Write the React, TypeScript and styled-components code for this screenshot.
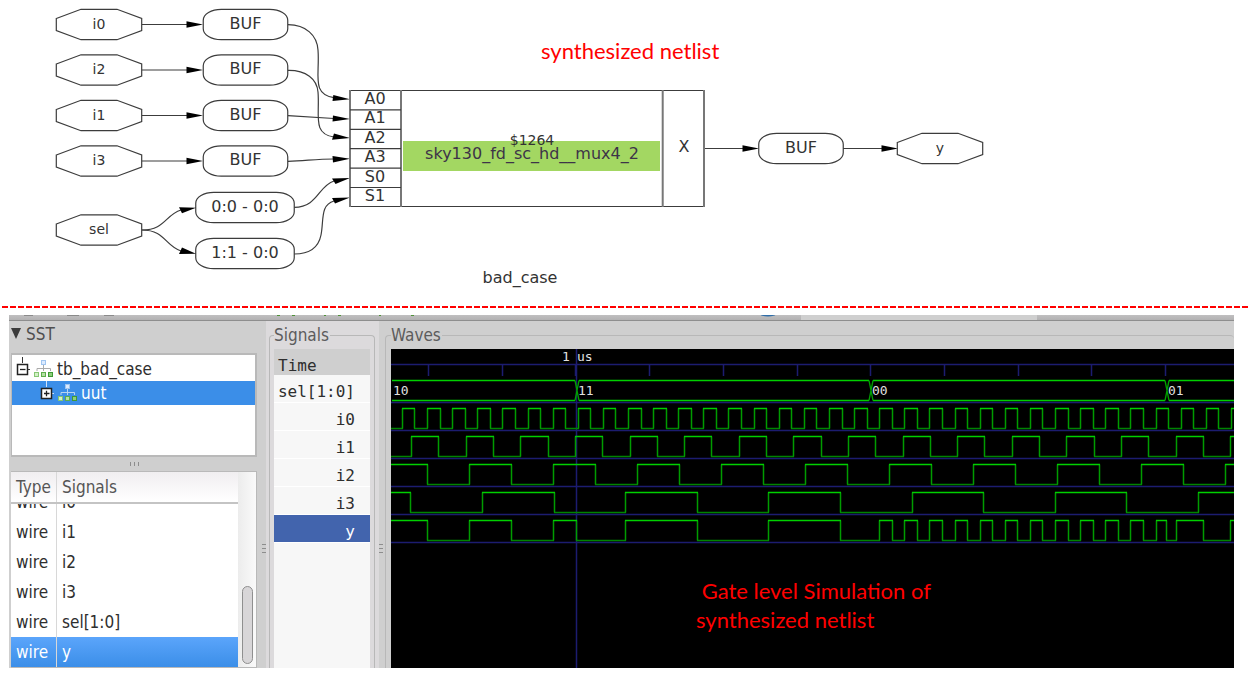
import React from "react";
import styled, { createGlobalStyle, css } from "styled-components";

const UI_FONT = `"DejaVu Sans Condensed", "DejaVu Sans", sans-serif`;
const MONO_FONT = `"DejaVu Sans Mono", monospace`;
const NOTE_FONT = `Lato, "Open Sans", sans-serif`;

const GlobalStyle = createGlobalStyle`
  * { box-sizing: border-box; }
  body { margin: 0; background: #fff; }
`;

const Page = styled.main`
  display: flex;
  flex-direction: column;
  padding-bottom: 8px;
`;

/* ---------- Netlist diagram ---------- */

const NetlistSection = styled.section`
  position: relative;
  overflow: hidden;
`;

const NetlistDrawing = styled.svg`
  display: block;
  font-family: "DejaVu Sans", sans-serif;
  font-size: 16px;
  fill: #333;
  text-anchor: middle;
`;

const NoteText = styled.p<{ $left: number; $top: number }>`
  position: absolute;
  left: ${(p) => p.$left}px;
  top: ${(p) => p.$top}px;
  margin: 0;
  font: 22px/29px ${NOTE_FONT};
  color: #f00;
  white-space: pre;
`;

const Divider = styled.hr`
  width: calc(100% - 2px);
  height: 2px;
  margin: 0 0 7px 2px;
  border: 0;
  background: repeating-linear-gradient(90deg, #f00 0 6px, #fff 6px 8px);
`;

const line = { fill: "none", stroke: "#3c3c3c", strokeWidth: 1.2 };

const Octagon = ({ x, y, label }: { x: number; y: number; label: string }) => (
  <g transform={`translate(${x} ${y})`}>
    <path {...line} d="M-42.7-6-18-15.2H18L42.7-6V6L18 15.2H-18L-42.7 6Z" />
    <text y={4} fontSize={14}>{label}</text>
  </g>
);

const RoundNode = ({ x, y, w, label }: { x: number; y: number; w: number; label: string }) => (
  <g transform={`translate(${x} ${y})`}>
    <rect {...line} x={-w / 2} y={-15.2} width={w} height={30.4} rx={18} ry={11} />
    <text y={4}>{label}</text>
  </g>
);

const Straight = ({ x1, x2, y }: { x1: number; x2: number; y: number }) => (
  <g>
    <path {...line} d={`M${x1} ${y}H${x2 - 15}`} />
    <path fill="#000" d={`M${x2 - 16.5} ${y - 3.2}L${x2} ${y}L${x2 - 16.5} ${y + 3.2}Z`} />
  </g>
);

const inputs = [
  { name: "i0", y: 24.5 },
  { name: "i2", y: 70 },
  { name: "i1", y: 115.5 },
  { name: "i3", y: 161 },
];

const wires = [
  "M288 24.7C306 25 317 35 318 50C320 75 311 94 334 97.7",
  "M288 70.3C306 70 317 79 318 92C320 115 312 134 334 137",
  "M288 115.7L334 118.5",
  "M288 161.3C305 161 315 159 334 159",
  "M294.3 207.3C318 207 318 186 334 181",
  "M294.3 254C312 254 319 245 321 235C324 220 320 205 334 201",
  "M142 230C165 230 165 215 181 210",
  "M142 230C165 230 165 246 181 251",
];

const heads = [
  "M333.3 95L350 99.3L332.5 101Z",
  "M334 133.5L350 138L332 139.8Z",
  "M333 115.5L350 119L332.500 121.5Z",
  "M332.500 156L350 158.700L333 162.500Z",
  "M332 178.500L350 178L335.500 184Z",
  "M332 198L350 197.500L335 203.500Z",
  "M179 207.300L196 207.700L182 213.300Z",
  "M182 247.500L196 253.700L179 254Z",
];

const pins = ["A0", "A1", "A2", "A3", "S0", "S1"];

const Netlist = () => (
  <NetlistSection>
    <NetlistDrawing width="1010" height="306" role="img" aria-label="Netlist of bad_case">
      {inputs.map((n) => (
        <g key={n.name}>
          <Octagon x={99} y={n.y} label={n.name} />
          <Straight x1={142} x2={203} y={n.y} />
          <RoundNode x={245.500} y={n.y} w={84.500} label="BUF" />
        </g>
      ))}
      <Octagon x={99} y={230} label="sel" />
      <RoundNode x={245} y={207.500} w={98.500} label="0:0 - 0:0" />
      <RoundNode x={245} y={253.500} w={98.500} label="1:1 - 0:0" />
      {wires.map((d) => <path key={d} {...line} d={d} />)}
      {heads.map((d) => <path key={d} fill="#000" d={d} />)}

      <rect x="403" y="141" width="257" height="30" fill="#a3d762" />
      <path {...line} d="M350 90.500H704V206.500H350Z" />
      <path {...line} strokeWidth={2} stroke="#777" d="M350 90V207M401 90V207M662.700 90V207M704 90V207" />
      {pins.map((p, i) => (
        <g key={p}>
          {i > 0 && <path {...line} d={`M350 ${90.500 + i * 19.400}H401`} />}
          <text x="375" y={104 + i * 19.400}>{p}</text>
        </g>
      ))}
      <text x="532" y="145" fontSize={14}>$1264</text>
      <text x="532" y="159" fill="#3d3348">sky130_fd_sc_hd__mux4_2</text>
      <text x="684" y="152">X</text>

      <Straight x1={705} x2={759} y={148.500} />
      <RoundNode x={801} y={148.500} w={84.500} label="BUF" />
      <Straight x1={843} x2={898} y={148.500} />
      <Octagon x={940} y={148.500} label="y" />
      <text x="520" y="283">bad_case</text>
    </NetlistDrawing>
    <NoteText $left={541} $top={36}>synthesized netlist</NoteText>
  </NetlistSection>
);

/* ---------- Waveform viewer ---------- */

const Viewer = styled.section`
  display: flex;
  flex-direction: column;
  margin: 0 14px 0 9px;
  background: #cfcfcf;
  font: 17px/24px ${UI_FONT};
  color: #2e2e2e;
  overflow: hidden;
`;

const ToolbarEdge = styled.div`
  height: 6px;
  border-bottom: 1px solid #8e8e8e;
  background: linear-gradient(#c0bfc0, #b2b1b2);
  svg { display: block; }
`;

const Panes = styled.div`
  display: flex;
  align-items: stretch;
`;

const TreePane = styled.div`
  display: flex;
  flex-direction: column;
  flex: none;
  width: 248px;
  padding: 1px 0 0 2px;
`;

const SstToggle = styled.button`
  display: flex;
  align-items: center;
  gap: 5px;
  height: 24px;
  margin-bottom: 7px;
  padding: 0;
  border: 0;
  background: none;
  font: inherit;
  color: #505050;
`;

const TreeBox = styled.ul`
  height: 104px;
  margin: 0;
  padding: 2px 0 0;
  border: 2px solid #b9b9b9;
  border-left-width: 1px;
  background: #fff;
  list-style: none;
`;

const TreeItem = styled.li<{ $depth: number; $selected?: boolean }>`
  display: flex;
  align-items: center;
  height: 24px;
  padding-left: ${(p) => 4 + p.$depth * 24}px;
  ${(p) => p.$selected && css`background: #3b8ee8; color: #fff;`}
  svg { flex: none; margin-right: 3px; }
`;

const RowGrip = styled.div`
  display: flex;
  justify-content: center;
  align-items: center;
  gap: 3px;
  height: 14px;
  i { width: 1px; height: 4px; background: #8d8d8d; }
`;

const ColumnGrip = styled.div<{ $width: number }>`
  display: flex;
  flex-direction: column;
  flex: none;
  align-items: flex-end;
  gap: 3px;
  width: ${(p) => p.$width}px;
  padding-top: 223px;
  i { width: 4px; height: 1px; background: #8d8d8d; }
`;

const SignalBox = styled.div`
  display: flex;
  flex: 1;
  border: 1px solid #b9b9b9;
  border-left: 0;
  background: #fff;
`;

const SignalTable = styled.table`
  display: flex;
  flex-direction: column;
  flex: 1;
  border-spacing: 0;
  thead {
    display: block;
    border-bottom: 2px solid #c4c4c4;
    background: linear-gradient(#f0eef0, #fff);
    color: #555;
  }
  tbody {
    display: flex;
    flex-direction: column;
    justify-content: flex-end;
    height: 163px;
    overflow: hidden;
  }
`;

const SignalRow = styled.tr<{ $selected?: boolean }>`
  display: grid;
  flex: none;
  grid-template-columns: 46px 1fr;
  height: 30px;
  line-height: 30px;
  ${(p) => p.$selected && css`
    background: linear-gradient(#5ba5fb, #3b8ee8);
    color: #fff;
  `}
  th, td { padding: 0 0 0 5px; font-weight: 400; text-align: left; }
  > :first-child { border-right: 1px solid #d8d8d8; }
`;

const Scrollbar = styled.div`
  display: flex;
  align-items: flex-end;
  justify-content: center;
  width: 18px;
  padding-bottom: 3px;
  background: linear-gradient(90deg, #ececec, #fafafa);
`;

const Thumb = styled.div`
  width: 11px;
  height: 78px;
  border: 1px solid #8f8f8f;
  border-radius: 6px;
  background: #d8d6d8;
`;

const SignalPane = styled.div`
  display: flex;
  flex: none;
  width: 113px;
  padding: 2px 4px 0 3px;
  background: #dcdadc;
`;

const WavePane = styled.div`
  display: flex;
  flex: 1;
  min-width: 0;
  padding: 2px 0 0 2px;
`;

const Frame = styled.fieldset<{ $open?: boolean }>`
  flex: 1;
  min-width: 0;
  margin: 0;
  padding: 2px ${(p) => (p.$open ? 0 : 4)}px 0 ${(p) => (p.$open ? 5 : 4)}px;
  border: 1px solid #b8b8b8;
  border-bottom: 0;
  border-right-width: ${(p) => (p.$open ? 0 : 1)}px;
  border-radius: 4px 4px 0 0;
  legend { padding: 0 1px 0 0; color: #5c5c5c; }
`;

const TraceNames = styled.ul`
  height: 319px;
  margin: 0;
  padding: 0;
  background: #f7f7f7;
  font: 16px/28px ${MONO_FONT};
  list-style: none;
`;

const TraceName = styled.li<{ $kind?: "time" | "selected" }>`
  height: 28px;
  padding-right: 15px;
  border-bottom: 1px solid #fff;
  line-height: 34px;
  text-align: right;
  ${(p) => p.$kind === "time" && css`
    height: 26px;
    padding: 0 0 0 4px;
    border: 0;
    background: #cfcfcf;
    text-align: left;
  `}
  ${(p) => p.$kind === "selected" && css`
    background: #4264ad;
    color: #fff;
  `}
`;

const WaveCanvas = styled.div`
  position: relative;
  height: 319px;
  background: #000;
  overflow: hidden;
`;

const WaveDrawing = styled.svg`
  display: block;
  width: 100%;
  height: 100%;
  font: 13px ${MONO_FONT};
  fill: #e0e0e0;
`;

const WAVE_END = 2600;

type Edge = { x: number; high: boolean };

/* Level changes of a square wave whose rising edge falls on `rise`. */
const clock = (rise: number, period: number): Edge[] => {
  const edges: Edge[] = [];
  for (let n = -2; rise + n * period < WAVE_END; n++) {
    edges.push({ x: rise + n * period, high: true });
    edges.push({ x: rise + (n + 0.5) * period, high: false });
  }
  return edges;
};

const levelAt = (edges: Edge[], x: number) => {
  let high = false;
  for (const e of edges) if (e.x <= x) high = e.high;
  return high;
};

const i0 = clock(11.4, 25.12);
const i1 = clock(20.6, 54.6);
const i2 = clock(78.5, 84.05);
const i3 = clock(91.5, 143.2);

const selects = [
  { from: 0, to: 185, value: "10", source: i2 },
  { from: 185, to: 479, value: "11", source: i3 },
  { from: 479, to: 775, value: "00", source: i0 },
  { from: 775, to: WAVE_END, value: "01", source: i1 },
];

/* The multiplexer output follows whichever input `sel` picks. */
const y: Edge[] = selects.flatMap((s) => [
  { x: s.from, high: levelAt(s.source, s.from) },
  ...s.source.filter((e) => e.x > s.from && e.x < s.to),
]);

const Trace = ({ edges, top }: { edges: Edge[]; top: number }) => {
  const hi = top + 0.5;
  const lo = top + 20.5;
  let highs = "";
  let lows = "";
  let sides = "";
  let x = 0;
  let high = levelAt(edges, 0);
  const run = (to: number) => {
    if (high) highs += `M${x} ${hi}H${to + 1}`;
    else lows += `M${x} ${lo}H${to + 1}`;
  };
  edges.filter((e) => e.x > 0).forEach((e) => {
    if (e.high === high) return;
    const at = Math.floor(e.x);
    run(at);
    sides += `M${at + 0.5} ${hi}V${lo}`;
    x = at;
    high = e.high;
  });
  run(WAVE_END);
  return (
    <g fill="none" strokeWidth={1.5}>
      <path d={lows} stroke="#008400" />
      <path d={sides} stroke="#009c00" />
      <path d={highs} stroke="#00d000" />
    </g>
  );
};

const ticks = Array.from({ length: 35 }, (_, n) => Math.floor(37.5 + n * 73.7) + 0.5);

const Waves = () => (
  <WaveDrawing role="img" aria-label="Waveforms">
    <g stroke="#1c1c70" strokeWidth={1.5} fill="none">
      <path d={`M0 15.500H${WAVE_END}`} />
      {ticks.map((x) => <path key={x} d={`M${x} 15V27`} />)}
      {[53.5, 81.5, 109.5, 137.5, 165.5, 193.5].map((sy) => (
        <path key={sy} d={`M0 ${sy}H${WAVE_END}`} />
      ))}
      <path d="M185.500 0V319" />
    </g>
    <text x="171" y="12">1</text>
    <text x="186" y="12">us</text>
    {selects.map((s, i) => (
      <g key={s.value}>
        <path
          fill="none"
          stroke="#00d000"
          strokeWidth={1.5}
          d={`M${s.from + (i ? 3 : 1)} 31.500H${s.to - 1}M${s.from + (i ? 3 : 1)} 51.500H${s.to - 1}`}
        />
        {i > 0 && (
          <path
            fill="none"
            stroke="#00a000"
            strokeWidth={1.3}
            d={`M${s.from - 1} 31.500L${s.from + 3} 51.500M${s.from + 3} 31.500L${s.from - 1} 51.500`}
          />
        )}
        <text x={s.from + 2} y="46">{s.value}</text>
      </g>
    ))}
    <Trace edges={i0} top={59} />
    <Trace edges={i1} top={87} />
    <Trace edges={i2} top={115} />
    <Trace edges={i3} top={143} />
    <Trace edges={y} top={171} />
  </WaveDrawing>
);

const TreeIcon = ({ expanded, selected }: { expanded?: boolean; selected?: boolean }) => (
  <svg width="38" height="24" viewBox="0 0 38 24">
    <path d="M6.500 0V6M12 12.500H14" stroke={selected ? "#cfe2fa" : "#333"} fill="none" />
    <rect x="1.500" y="7.500" width="10" height="10" fill="#fff" stroke="#222" strokeWidth="1.500" />
    <path d={expanded ? "M4 12.500H9.500" : "M4 12.500H9.500M6.500 9.800V15.200"} stroke="#222" strokeWidth="1.300" />
    <path d="M27.500 8V11.500M21 14V11.500H34.500V14M27.500 11V14" stroke={selected ? "#b9d4ef" : "#aaa"} fill="none" />
    <rect x="25.500" y="3.500" width="4" height="4" fill="#dcebff" stroke="#a0c5f0" />
    <rect x="18.500" y="15.500" width="4" height="4" fill="#d4f0c8" stroke="#86c774" />
    <rect x="25.500" y="15.500" width="4" height="4" fill="#b5e0a4" stroke="#5dad4c" />
    <rect x="32.500" y="15.500" width="4" height="4" fill="#8fce7c" stroke="#3f9a35" />
  </svg>
);

const tableRows = ["i0", "i1", "i2", "i3", "sel[1:0]", "y"];

export default function App() {
  return (
    <Page>
      <GlobalStyle />
      <Netlist />
      <Divider />
      <Viewer>
        <ToolbarEdge>
          <svg width="100%" height="5" aria-hidden="true">
            <rect x="792" width="236" height="5" fill="#cfcfcf" />
            <ellipse cx="759" cy="-1" rx="8" ry="2.500" fill="#2f6da8" />
            <path d="M268 .5H271M283 .5H286M315 .5H317M329 .5H332M370 .5H372M402 .5H405" stroke="#4f9138" />
            <path d="M15 .5H24M58 .5H70M95 .5H105" stroke="#8a8a8a" />
          </svg>
        </ToolbarEdge>
        <Panes>
          <TreePane>
            <SstToggle type="button" aria-expanded="true">
              <svg width="10" height="12" viewBox="0 0 10 12">
                <path d="M0 0H10L5 11Z" fill="#3c3c3c" />
              </svg>
              SST
            </SstToggle>
            <TreeBox>
              <TreeItem $depth={0}><TreeIcon expanded />tb_bad_case</TreeItem>
              <TreeItem $depth={1} $selected><TreeIcon selected />uut</TreeItem>
            </TreeBox>
            <RowGrip><i /><i /><i /></RowGrip>
            <SignalBox>
              <SignalTable>
                <thead>
                  <SignalRow><th>Type</th><th>Signals</th></SignalRow>
                </thead>
                <tbody>
                  {tableRows.map((name) => (
                    <SignalRow key={name} $selected={name === "y"}>
                      <td>wire</td>
                      <td>{name}</td>
                    </SignalRow>
                  ))}
                </tbody>
              </SignalTable>
              <Scrollbar><Thumb /></Scrollbar>
            </SignalBox>
          </TreePane>
          <ColumnGrip $width={9}><i /><i /><i /></ColumnGrip>
          <SignalPane>
            <Frame>
              <legend>Signals</legend>
              <TraceNames>
                <TraceName $kind="time">Time</TraceName>
                {["sel[1:0]", "i0", "i1", "i2", "i3"].map((name) => (
                  <TraceName key={name}>{name}</TraceName>
                ))}
                <TraceName $kind="selected">y</TraceName>
              </TraceNames>
            </Frame>
          </SignalPane>
          <ColumnGrip $width={4}><i /><i /><i /></ColumnGrip>
          <WavePane>
            <Frame $open>
              <legend>Waves</legend>
              <WaveCanvas>
                <Waves />
                <NoteText $left={305} $top={227}>{" Gate level Simulation of\nsynthesized netlist"}</NoteText>
              </WaveCanvas>
            </Frame>
          </WavePane>
        </Panes>
      </Viewer>
    </Page>
  );
}
